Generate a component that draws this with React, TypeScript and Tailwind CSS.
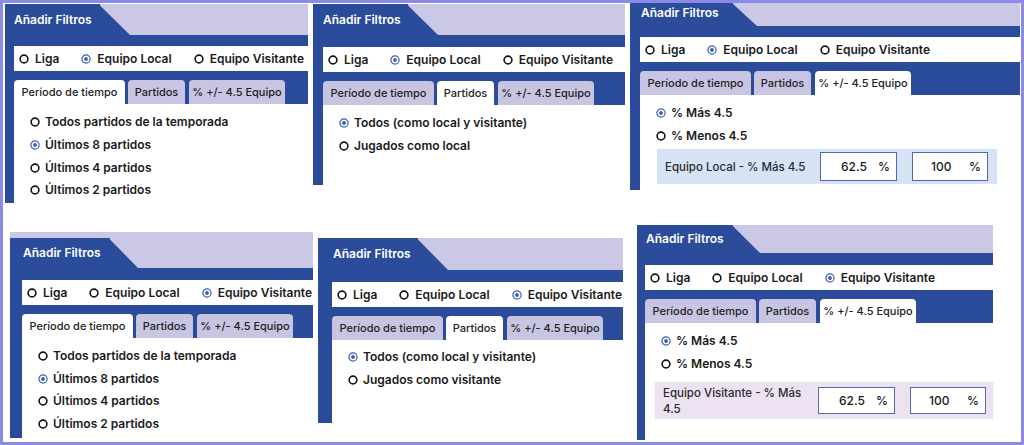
import React from 'react';

type Team = 0 | 1 | 2;
type TabIdx = 0 | 1 | 2;

function Radio({ on }: { on?: boolean }) {
  return on ? (
    <svg width="10" height="10" viewBox="0 0 10 10" className="shrink-0">
      <circle cx="5" cy="5" r="4.1" fill="none" stroke="#3b5cb3" strokeWidth="1.2" />
      <circle cx="5" cy="5" r="1.9" fill="#3b5cb3" />
    </svg>
  ) : (
    <svg width="10" height="10" viewBox="0 0 10 10" className="shrink-0">
      <circle cx="5" cy="5" r="3.9" fill="none" stroke="#141414" strokeWidth="1.6" />
    </svg>
  );
}

function Header({ h, blueW, triW, pl, top = '' }: { h: string; blueW: string; triW: string; pl: string; top?: string }) {
  return (
    <div className={`flex shrink-0 bg-[#cbc8e5] ${h}`}>
      <div className={`flex self-stretch ${top}`}>
        <div className={`flex items-center bg-[#2b4c9b] text-white text-[12px] font-semibold whitespace-nowrap ${blueW} ${pl}`}>
          Añadir Filtros
        </div>
        <svg className={`h-full ${triW}`} viewBox="0 0 10 10" preserveAspectRatio="none">
          <polygon points="-0.5,0 10,10 -0.5,10" fill="#2b4c9b" />
        </svg>
      </div>
    </div>
  );
}

function TeamRow({ team, mt }: { team: Team; mt: string }) {
  const labels = ['Liga', 'Equipo Local', 'Equipo Visitante'];
  return (
    <div className={`h-[25px] shrink-0 bg-white flex items-center pl-[5px] gap-[22px] whitespace-nowrap text-[12px] font-semibold text-[#1a1a1a] ${mt}`}>
      {labels.map((l, i) => (
        <div key={l} className="flex items-center gap-[6px]">
          <Radio on={i === team} />
          <span>{l}</span>
        </div>
      ))}
    </div>
  );
}

function Tabs({ active }: { active: TabIdx }) {
  const tabs = [
    { t: 'Período de tiempo', w: 'w-[111px]', m: '' },
    { t: 'Partidos', w: 'w-[57px]', m: 'ml-[3px]' },
    { t: '% +/- 4.5 Equipo', w: 'w-[96px]', m: 'ml-[4px]' },
  ];
  return (
    <div className="flex h-[24px] shrink-0 mt-[9px]">
      {tabs.map((tab, i) => (
        <div
          key={tab.t}
          className={`flex items-center justify-center rounded-t-[4px] whitespace-nowrap text-[11px] font-medium text-[#222] ${tab.w} ${tab.m} ${
            i === active ? 'bg-white' : 'bg-[#c8c5e3]'
          }`}
        >
          {tab.t}
        </div>
      ))}
    </div>
  );
}

function OptionList({ items, sel, pt, step }: { items: string[]; sel: number; pt: string; step: string }) {
  return (
    <div className={`pl-[16px] ${pt}`}>
      {items.map((t, i) => (
        <div key={t} className={`flex items-center gap-[5px] whitespace-nowrap text-[12px] font-semibold text-[#1a1a1a] ${step}`}>
          <Radio on={i === sel} />
          <span>{t}</span>
        </div>
      ))}
    </div>
  );
}

function PercentContent({ label, boxBg, boxCls, inputH }: { label: string; boxBg: string; boxCls: string; inputH: string }) {
  return (
    <div className="pt-[6px]">
      <OptionList items={['% Más 4.5', '% Menos 4.5']} sel={0} pt="" step="h-[23px]" />
      <div className={`flex items-center ${boxBg} ${boxCls}`}>
        <div className="w-[163px] shrink-0 pl-[8px] pr-[5px] text-[11.5px] leading-[16px] font-medium text-[#2a2a2a]">{label}</div>
        <div className={`w-[77px] shrink-0 bg-white border border-[#5468ad] flex items-center justify-between pl-[20px] pr-[6px] text-[12px] font-medium text-[#1a1a1a] ${inputH}`}>
          <span>62.5</span>
          <span>%</span>
        </div>
        <div className={`w-[76px] shrink-0 ml-[15px] bg-white border border-[#5468ad] flex items-center justify-between pl-[18px] pr-[6px] text-[12px] font-medium text-[#1a1a1a] ${inputH}`}>
          <span>100</span>
          <span>%</span>
        </div>
      </div>
    </div>
  );
}

function Panel({
  className,
  header,
  bodyPl,
  rowMt,
  team,
  tab,
  children,
}: {
  className: string;
  header: React.ReactNode;
  bodyPl: string;
  rowMt: string;
  team: Team;
  tab: TabIdx;
  children: React.ReactNode;
}) {
  return (
    <div className={`flex flex-col shrink-0 bg-[#2b4c9b] overflow-hidden ${className}`}>
      {header}
      <div className={`flex flex-col flex-1 min-h-0 ${bodyPl}`}>
        <TeamRow team={team} mt={rowMt} />
        <Tabs active={tab} />
        <div className="flex-1 bg-white">{children}</div>
      </div>
    </div>
  );
}

const periodItems = ['Todos partidos de la temporada', 'Últimos 8 partidos', 'Últimos 4 partidos', 'Últimos 2 partidos'];

export default function App() {
  return (
    <div className="w-[1024px] h-[445px] bg-white border-[3px] border-[#8b8be6] box-border overflow-hidden flex flex-col font-['Inter','Noto_Sans',sans-serif]">
      <div className="flex items-start h-[200px] shrink-0">
        <Panel
          className="w-[303px] h-[199px] ml-[2px] mt-[1px]"
          header={<Header h="h-[31px]" blueW="w-[95px]" triW="w-[30px]" pl="pl-[9px]" />}
          bodyPl="pl-[9px]"
          rowMt="mt-[11px]"
          team={1}
          tab={0}
        >
          <OptionList items={periodItems} sel={1} pt="pt-[7px]" step="h-[22.7px]" />
        </Panel>
        <Panel
          className="w-[312px] h-[181px] ml-[5px] mt-[1px]"
          header={<Header h="h-[31px]" blueW="w-[95px]" triW="w-[30px]" pl="pl-[10px]" />}
          bodyPl="pl-[10px]"
          rowMt="mt-[12px]"
          team={1}
          tab={1}
        >
          <OptionList items={['Todos (como local y visitante)', 'Jugados como local']} sel={0} pt="pt-[6px]" step="h-[23px]" />
        </Panel>
        <Panel
          className="w-[390px] h-[187px] ml-[5px]"
          header={<Header h="h-[23px]" blueW="w-[103px]" triW="w-[24px]" pl="pl-[11px] pb-[4px]" />}
          bodyPl="pl-[10px]"
          rowMt="mt-[11px]"
          team={1}
          tab={2}
        >
          <PercentContent
            label="Equipo Local - % Más 4.5"
            boxBg="bg-[#d5e3f5]"
            boxCls="w-[340px] h-[35px] ml-[17px] mt-[2px]"
            inputH="h-[29px]"
          />
        </Panel>
      </div>
      <div className="flex items-start">
        <Panel
          className="w-[303px] h-[206px] ml-[7px] mt-[29px]"
          header={<Header h="h-[36px]" top="mt-[6px]" blueW="w-[100px]" triW="w-[28px]" pl="pl-[13px]" />}
          bodyPl="pl-[12px]"
          rowMt="mt-[12px]"
          team={2}
          tab={0}
        >
          <OptionList items={periodItems} sel={1} pt="pt-[7px]" step="h-[22.5px]" />
        </Panel>
        <Panel
          className="w-[305px] h-[185px] ml-[5px] mt-[35px]"
          header={<Header h="h-[32px]" blueW="w-[100px]" triW="w-[30px]" pl="pl-[15px]" />}
          bodyPl="pl-[14px]"
          rowMt="mt-[12px]"
          team={2}
          tab={1}
        >
          <OptionList items={['Todos (como local y visitante)', 'Jugados como visitante']} sel={0} pt="pt-[5px]" step="h-[23px]" />
        </Panel>
        <Panel
          className="w-[356px] h-[215px] ml-[14px] mt-[22px]"
          header={<Header h="h-[28px]" blueW="w-[96px]" triW="w-[27px]" pl="pl-[9px]" />}
          bodyPl="pl-[8px]"
          rowMt="mt-[12px]"
          team={2}
          tab={2}
        >
          <PercentContent
            label="Equipo Visitante - % Más 4.5"
            boxBg="bg-[#ece2f1]"
            boxCls="w-[338px] h-[37px] ml-[10px] mt-[7px]"
            inputH="h-[27px]"
          />
        </Panel>
      </div>
    </div>
  );
}
